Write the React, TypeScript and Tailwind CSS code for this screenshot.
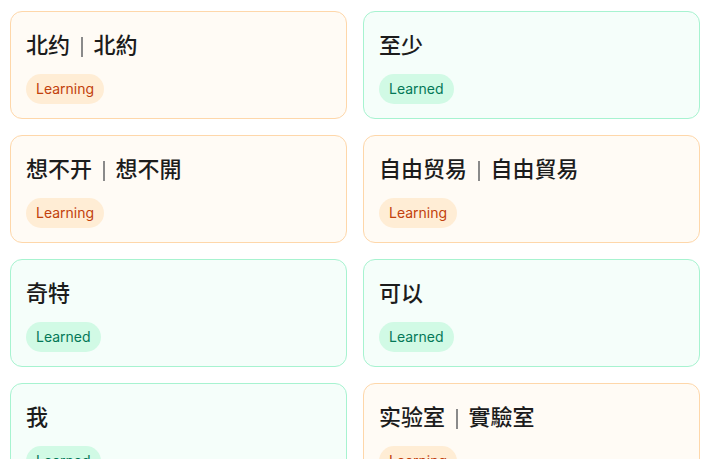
import React from "react";

type Item = { s: string; t?: string; learned: boolean };

const items: Item[] = [
  { s: "北约", t: "北約", learned: false },
  { s: "至少", learned: true },
  { s: "想不开", t: "想不開", learned: false },
  { s: "自由贸易", t: "自由貿易", learned: false },
  { s: "奇特", learned: true },
  { s: "可以", learned: true },
  { s: "我", learned: true },
  { s: "实验室", t: "實驗室", learned: false },
];

function Card({ item }: { item: Item }) {
  const learned = item.learned;
  return (
    <div
      className={
        learned
          ? "rounded-xl border border-[#a7f3d0] bg-[#f5fefa] px-[15px] pt-4 pb-[14px]"
          : "rounded-xl border border-[#fed7aa] bg-[#fffbf5] px-[15px] pt-4 pb-[14px]"
      }
    >
      <div className="flex items-center h-[34px] text-[22px] font-medium text-[#1c1c1c] leading-[34px]">
        <span>{item.s}</span>
        {item.t ? (
          <>
            <span className="inline-block w-[1.5px] h-5 mt-1 bg-[#8a8a8a] mx-[11px]" />
            <span>{item.t}</span>
          </>
        ) : null}
      </div>
      <div className="mt-3 flex">
        <span
          className={
            learned
              ? "rounded-full bg-[#d1fae5] text-[#047857] px-2.5 py-[5px] text-sm leading-5"
              : "rounded-full bg-[#ffedd5] text-[#c2410c] px-2.5 py-[5px] text-sm leading-5"
          }
        >
          {learned ? "Learned" : "Learning"}
        </span>
      </div>
    </div>
  );
}

export default function App() {
  return (
    <div
      className="min-h-screen bg-white px-2.5 pt-[11px] pb-4"
      style={{ fontFamily: "Inter, 'Noto Sans CJK SC', sans-serif" }}
    >
      <div className="grid grid-cols-2 gap-4">
        {items.map((it, i) => (
          <Card key={i} item={it} />
        ))}
      </div>
    </div>
  );
}
